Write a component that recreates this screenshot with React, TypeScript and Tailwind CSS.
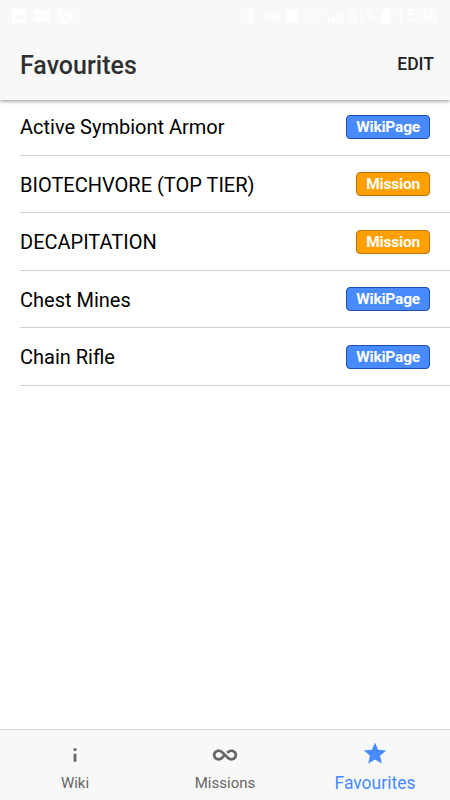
import { IoMdInfinite, IoMdInformation, IoMdStar } from 'react-icons/io'
import { MdBluetooth, MdVolumeOff, MdWifi } from 'react-icons/md'

type Kind = 'WikiPage' | 'Mission'

const favourites: { title: string; kind: Kind }[] = [
  { title: 'Active Symbiont Armor', kind: 'WikiPage' },
  { title: 'BIOTECHVORE (TOP TIER)', kind: 'Mission' },
  { title: 'DECAPITATION', kind: 'Mission' },
  { title: 'Chest Mines', kind: 'WikiPage' },
  { title: 'Chain Rifle', kind: 'WikiPage' },
]

const badgeStyles: Record<Kind, string> = {
  WikiPage: 'bg-[#488aff] border-[#1c51b0]',
  Mission: 'bg-[#ff9f00] border-[#b8741c]',
}

function StatusBar() {
  return (
    <div className="flex h-[31px] items-center justify-between pl-[11px] pr-[13px] text-white">
      <div className="flex items-center gap-[7px]">
        <svg viewBox="0 0 16 16" className="h-4 w-4">
          <path fill="currentColor" fillRule="evenodd" d="M1 1h14v14H1zM3 11V8l3-2 2 3 3-4 2 3v3z" />
        </svg>
        <svg viewBox="0 0 16 16" className="h-4 w-4">
          <path fill="currentColor" fillRule="evenodd" d="M1 2h14v12H1zM4 4v8H3V4l5 4 5-4v8h-1V6L8 9.5 4 6z" />
        </svg>
        <svg viewBox="0 0 16 16" className="h-4 w-4" fill="none" stroke="currentColor" strokeWidth="1.6">
          <path d="M8 1a7 7 0 1 0 5 2M11 1.7a7 7 0 0 1 4 5.5M6 4.5A4 4 0 1 0 10 4.5M8 4v4" />
        </svg>
      </div>
      <div className="flex items-center">
        <MdBluetooth className="h-[18px] w-[18px]" />
        <MdVolumeOff className="ml-[3px] h-4 w-4" />
        <svg viewBox="0 0 4 16" className="-ml-[2px] h-4 w-1" fill="none" stroke="currentColor" strokeWidth="1.2">
          <path d="M1 2l2 2-2 2 2 2-2 2 2 2-2 2" />
        </svg>
        <svg viewBox="0 0 16 16" className="ml-[4px] h-4 w-4" fill="currentColor">
          <path fillRule="evenodd" d="M8 1.5a6.5 6.5 0 1 1 0 13 6.5 6.5 0 0 1 0-13zM7.3 4.5v4h3.5V7.3H8.6V4.5z" />
          <path d="M0.8 4L4 1l1 1-3.2 3zM15.2 4L12 1l-1 1 3.2 3zM3 12l1.5 1.5L3 15l-1-1zM13 12l-1.5 1.5L13 15l1-1z" />
        </svg>
        <MdWifi className="ml-[7px] h-4 w-4 opacity-70" />
        <svg viewBox="0 0 16 16" className="ml-[4px] h-4 w-4" fill="currentColor">
          <path d="M1 12h3v3H1zM5 9h3v6H5z" />
          <path d="M9 5h3v10H9zM13 1h3v14h-3z" opacity="0.5" />
        </svg>
        <span className="ml-[5px] w-[30px] text-[17px] leading-5 tracking-[-1px]">81%</span>
        <svg viewBox="0 0 10 16" className="ml-[3px] h-4 w-[10px]" fill="currentColor">
          <path d="M3 0h4v2h3v14H0V2h3z" />
        </svg>
        <span className="ml-[5px] text-[18px] leading-5 tracking-[-0.7px]">15:48</span>
      </div>
    </div>
  )
}

function App() {
  return (
    <div className="flex h-screen flex-col overflow-hidden bg-white font-[Roboto,sans-serif] text-black">
      <header className="relative z-10 h-[100px] shrink-0 bg-[#f8f8f8] shadow-[0_1px_4px_rgba(0,0,0,0.45)]">
        <StatusBar />
        <div className="flex h-[66px] items-center justify-between pl-5 pr-4">
          <h1 className="pt-[4px] text-[25px] font-medium leading-8 text-[#303030]">Favourites</h1>
          <button className="text-[17.5px] font-medium leading-6 text-[#222]">EDIT</button>
        </div>
      </header>

      {/* List starts slightly under the header */}
      <ul className="-mt-[2px] flex-1 pl-5">
        {favourites.map(({ title, kind }) => (
          <li key={title} className="flex h-[57.5px] items-center justify-between border-b border-[#d0d0d0] pr-5">
            <span className="pt-[1.5px] text-[20px] leading-6">{title}</span>
            <span
              className={`mt-px flex h-6 items-center rounded-[4px] border px-[9px] text-[15.5px] font-bold leading-5 tracking-[-0.2px] text-white ${badgeStyles[kind]}`}
            >
              {kind}
            </span>
          </li>
        ))}
      </ul>

      <nav className="grid h-[71px] shrink-0 grid-cols-3 border-t border-[#dcdcdc] bg-[#f8f8f8] text-[#666]">
        <a className="flex flex-col items-center pt-[10px]">
          <IoMdInformation className="h-[30px] w-[30px]" />
          <span className="mt-[3px] text-[15px] leading-5">Wiki</span>
        </a>
        <a className="flex flex-col items-center pt-[10px]">
          <IoMdInfinite className="h-[30px] w-[30px]" />
          <span className="mt-[3px] text-[15px] leading-5">Missions</span>
        </a>
        <a className="flex flex-col items-center pt-[9px] text-[#488aff]">
          <IoMdStar className="h-[28px] w-[28px]" />
          <span className="mt-1 text-[17.5px] leading-6">Favourites</span>
        </a>
      </nav>
    </div>
  )
}

export default App
